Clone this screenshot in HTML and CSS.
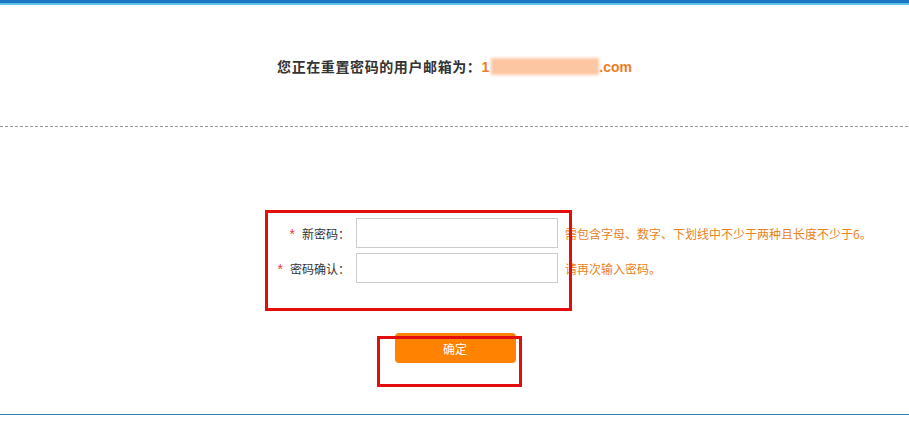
FILE: index.html
```html
<!DOCTYPE html>
<html lang="zh-CN">
<head>
<meta charset="utf-8">
<title>重置密码</title>
<link rel="stylesheet" href="styles.css">
</head>
<body>
<div class="topbar"></div>
<main class="page">
  <h1 class="title"><span class="title-text">您正在重置密码的用户邮箱为：</span><span class="email">1<span class="blur"></span>.com</span></h1>
  <div class="divider"></div>
  <form class="form">
    <div class="row">
      <label class="label"><span class="star">*</span>新密码：</label>
      <input class="field" type="password">
      <span class="hint">需包含字母、数字、下划线中不少于两种且长度不少于6。</span>
    </div>
    <div class="row">
      <label class="label"><span class="star">*</span>密码确认：</label>
      <input class="field" type="password">
      <span class="hint">请再次输入密码。</span>
    </div>
    <div class="actions">
      <button type="button" class="btn">确定</button>
    </div>
  </form>
  <div class="bottomline"></div>
</main>
<div class="mark mark-form"></div>
<div class="mark mark-btn"></div>
</body>
</html>
```

FILE: styles.css
```css
html, body {
  margin: 0;
  padding: 0;
  background: #fff;
  font-family: "Noto Sans CJK SC", "Liberation Sans", sans-serif;
  color: #333;
}
.topbar {
  height: 3px;
  background: #1b76c0;
  border-bottom: 2px solid #5cc1e6;
}
.page {
  display: flex;
  flex-direction: column;
}
.title {
  margin: 51px 0 0;
  height: 20px;
  line-height: 20px;
  font-size: 14px;
  font-weight: bold;
  text-align: center;
  color: #333;
  font-family: "Noto Sans CJK SC", "Liberation Sans", sans-serif;
}
.title-text {
  letter-spacing: 0.6px;
}
.email {
  color: #f07c1e;
  font-family: "Liberation Sans", "Noto Sans CJK SC", sans-serif;
}
.blur {
  display: inline-block;
  width: 108px;
  height: 17px;
  vertical-align: -3px;
  background: #fdc6a2;
  filter: blur(1.5px);
  margin-left: 2px;
}
.divider {
  margin-top: 50px;
  height: 1px;
  background: repeating-linear-gradient(to right, #999 0 3px, transparent 3px 5px);
}
.form {
  margin: 91px 0 0;
  display: flex;
  flex-direction: column;
  gap: 5px;
}
.row {
  display: grid;
  grid-template-columns: 350px 202px auto;
  column-gap: 6px;
  align-items: center;
  height: 30px;
}
.label {
  text-align: right;
  font-size: 12px;
  color: #333;
}
.star {
  color: #e4393c;
  margin-right: 7px;
  font-family: "Liberation Sans", sans-serif;
  font-size: 14px;
}
.field {
  box-sizing: border-box;
  width: 202px;
  height: 30px;
  border: 1px solid #ccc;
  margin: 0;
  padding: 0 4px;
  outline: none;
}
.hint {
  font-size: 12px;
  color: #e9821c;
  margin-left: 1px;
  white-space: nowrap;
}
.actions {
  display: flex;
  justify-content: center;
  margin-top: 45px;
}
.btn {
  width: 121px;
  height: 30px;
  margin-left: 1px;
  border: 0;
  border-radius: 4px;
  background: #ff8200;
  color: #fff;
  font-size: 12px;
  font-family: "Noto Sans CJK SC", sans-serif;
}
.bottomline {
  margin-top: 51px;
  height: 0;
  border-top: 1px solid #2f7fb0;
}
.mark {
  position: absolute;
  box-sizing: border-box;
  border: 3px solid #e30d0d;
}
.mark-form {
  left: 265px;
  top: 210px;
  width: 307px;
  height: 101px;
}
.mark-btn {
  left: 377px;
  top: 336px;
  width: 145px;
  height: 51px;
}
```
